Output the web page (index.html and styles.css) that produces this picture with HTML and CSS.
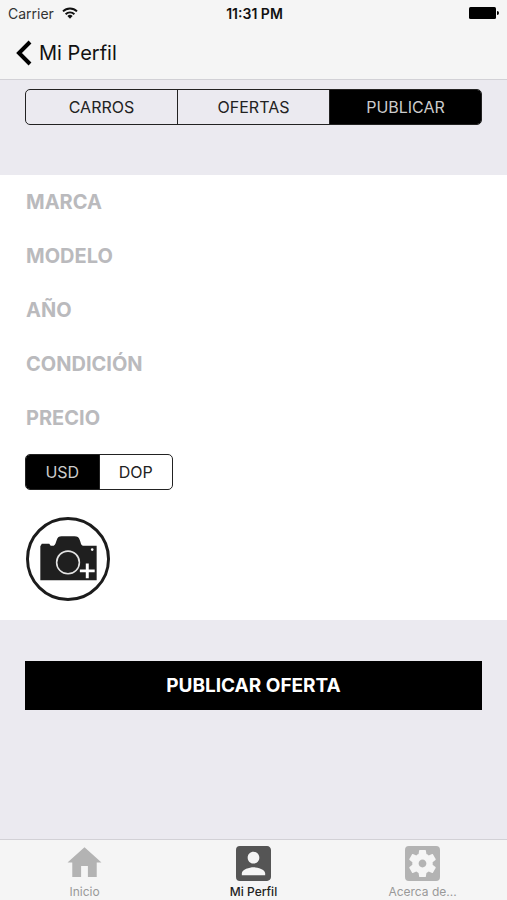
FILE: index.html
```html
<!DOCTYPE html>
<html lang="es">
<head>
<meta charset="utf-8">
<meta name="viewport" content="width=device-width, initial-scale=1">
<title>Mi Perfil</title>
<link rel="stylesheet" href="styles.css">
</head>
<body>
<div class="app">
  <header class="top">
    <div class="status">
      <div class="carrier">
        <span>Carrier</span>
        <svg class="wifi" viewBox="0 0 16 12" aria-hidden="true">
          <path d="M1 4.400a10 10 0 0 1 14 0M3.600 7.200a6.300 6.300 0 0 1 8.800 0" fill="none" stroke="currentColor" stroke-width="1.900"/>
          <path d="M8 11.700 5.400 9.100a3.700 3.700 0 0 1 5.200 0z" fill="currentColor"/>
        </svg>
      </div>
      <time class="clock">11:31 PM</time>
      <svg class="battery" viewBox="0 0 30 12" aria-hidden="true">
        <rect width="27" height="12" rx="1.500"/>
        <path d="M28 4a2 2 0 0 1 0 4z"/>
      </svg>
    </div>
    <nav class="nav">
      <a class="back" href="#perfil">
        <svg class="chevron" viewBox="0 0 16 26" aria-hidden="true">
          <path d="M14 2 3 13l11 11" fill="none" stroke="currentColor" stroke-width="4"/>
        </svg>
        <span>Mi Perfil</span>
      </a>
    </nav>
  </header>

  <main class="content">
    <div class="sections">
      <div class="segmented">
        <button class="segment" type="button">CARROS</button>
        <button class="segment" type="button">OFERTAS</button>
        <button class="segment selected" type="button">PUBLICAR</button>
      </div>
    </div>

    <form class="form">
      <div class="fields">
        <input class="field" type="text" placeholder="MARCA" aria-label="Marca">
        <input class="field" type="text" placeholder="MODELO" aria-label="Modelo">
        <input class="field" type="text" placeholder="AÑO" aria-label="Año">
        <input class="field" type="text" placeholder="CONDICIÓN" aria-label="Condición">
        <input class="field" type="text" placeholder="PRECIO" aria-label="Precio">
        <div class="segmented currency">
          <button class="segment selected" type="button">USD</button>
          <button class="segment" type="button">DOP</button>
        </div>
        <button class="photo" type="button" aria-label="Agregar foto">
          <svg viewBox="0 0 85 85" aria-hidden="true">
            <circle cx="42.500" cy="42.500" r="41" fill="#fff" stroke="#1c1c1c" stroke-width="3"/>
            <path d="M14.500 64V29.500l1.500-2.500h7.500l1.500 2H28c2-1 2-3 3-5.500 1-3 2.500-4 5-4h13c3 0 4.500 1 5.500 4 1 2.500 1 5 3 5.500H71.500V64z" fill="#1f1f1f"/>
            <circle cx="42.500" cy="46" r="11.500" fill="none" stroke="#e4e4e4" stroke-width="1.600"/>
            <circle cx="67" cy="33" r="1.300" fill="#fff"/>
            <path d="M62 47v15M54.500 54.500h15" fill="none" stroke="#fff" stroke-width="3"/>
          </svg>
        </button>
      </div>
      <div class="actions">
        <button class="submit" type="button">PUBLICAR OFERTA</button>
      </div>
    </form>
  </main>

  <nav class="tabs">
    <a class="tab" href="#inicio">
      <svg class="tab-icon" viewBox="1.700 2.300 20.600 20.600" aria-hidden="true"><path d="M10 20.500v-6.500h4v6.500h5.200v-8.500H22L12 3 2 12h2.800v8.500z"/></svg>
      <span>Inicio</span>
    </a>
    <a class="tab current" href="#perfil">
      <svg class="tab-icon" viewBox="3 3 18 18" aria-hidden="true"><path d="M3 5v14a2 2 0 0 0 2 2h14c1.100 0 2-.9 2-2V5c0-1.100-.9-2-2-2H5a2 2 0 0 0-2 2zm12 4c0 1.660-1.340 3-3 3s-3-1.340-3-3 1.340-3 3-3 3 1.340 3 3zm-9 8c0-2 4-3.100 6-3.100s6 1.100 6 3.100v1H6v-1z"/></svg>
      <span>Mi Perfil</span>
    </a>
    <a class="tab" href="#acerca">
      <svg class="tab-icon" viewBox="3 3 18 18" aria-hidden="true"><path d="M12 10c-1.100 0-2 .9-2 2s.9 2 2 2 2-.9 2-2-.9-2-2-2zm7-7H5a2 2 0 0 0-2 2v14a2 2 0 0 0 2 2h14a2 2 0 0 0 2-2V5a2 2 0 0 0-2-2zm-1.750 9c0 .23-.02.46-.05.68l1.480 1.160c.13.110.17.3.080.45l-1.400 2.420c-.09.150-.27.210-.43.150l-1.740-.7c-.36.280-.76.510-1.180.69l-.26 1.850c-.03.170-.18.3-.35.3h-2.800c-.17 0-.32-.13-.35-.29l-.26-1.850c-.43-.18-.82-.41-1.180-.69l-1.740.7c-.16.060-.34 0-.43-.15l-1.400-2.420c-.09-.15-.05-.34.080-.45l1.480-1.160c-.03-.23-.05-.46-.05-.69s.02-.46.050-.68l-1.480-1.160c-.13-.11-.17-.3-.08-.45l1.400-2.420c.09-.15.27-.21.43-.15l1.740.7c.36-.28.76-.51 1.180-.69l.26-1.850c.03-.17.18-.3.350-.3h2.800c.17 0 .32.130.35.290l.26 1.850c.43.180.82.410 1.180.69l1.740-.7c.16-.06.340 0 .43.150l1.400 2.420c.09.150.05.340-.08.450l-1.480 1.160c.03.230.05.460.05.690z"/></svg>
      <span>Acerca de...</span>
    </a>
  </nav>
</div>
</body>
</html>
```
FILE: styles.css
```css
* {
  box-sizing: border-box;
}

body {
  margin: 0;
  background: #ebeaf0;
  color: #111;
  font-family: Inter, "Liberation Sans", sans-serif;
}

button,
input {
  font: inherit;
}

a {
  color: inherit;
  text-decoration: none;
}

.app {
  display: flex;
  flex-direction: column;
  min-height: 100vh;
}

.top {
  background: #f5f5f5;
  border-bottom: 1px solid #d2d1d6;
}

.status {
  display: grid;
  grid-template-columns: 1fr auto 1fr;
  align-items: center;
  height: 26px;
  padding: 0 8px;
  font-size: 14px;
}

.carrier {
  display: flex;
  align-items: center;
  gap: 8px;
  color: #333;
}

.wifi {
  width: 16px;
  height: 12px;
  color: #111;
}

.clock {
  padding-left: 2px;
  font-weight: 600;
}

.battery {
  justify-self: end;
  width: 30px;
  height: 12px;
}

.nav {
  display: flex;
  align-items: center;
  height: 53px;
  padding: 0 16px;
}

.back {
  display: flex;
  align-items: center;
  gap: 7px;
  font-size: 20px;
}

.chevron {
  width: 16px;
  height: 26px;
  color: #000;
}

.content {
  flex: 1;
}

.sections {
  padding: 9px 25px 50px;
}

.segmented {
  display: flex;
  height: 36px;
  overflow: hidden;
  border: 1px solid #222;
  border-radius: 5px;
}

.segment {
  flex: 1;
  padding: 0;
  border: 0;
  background: none;
  color: #222;
  font-size: 16px;
}

.segment + .segment {
  border-left: 1px solid #222;
}

.segment.selected {
  background: #000;
  color: #ccc;
}

.fields {
  display: flex;
  flex-direction: column;
  padding: 0 25px 19px;
  background: #fff;
}

.field {
  width: 100%;
  height: 54px;
  padding: 0 1px;
  border: 0;
  outline: 0;
  background: none;
  color: #222;
  font-size: 20px;
  font-weight: 700;
}

.field::placeholder {
  color: #bababd;
  opacity: 1;
}

.currency {
  width: 148px;
  margin-top: 9px;
}

.photo {
  width: 84px;
  height: 84px;
  margin: 27px 1px 0;
  padding: 0;
  border: 0;
  border-radius: 50%;
  background: none;
}

.photo svg {
  display: block;
}

.actions {
  padding: 41px 25px;
}

.submit {
  width: 100%;
  height: 49px;
  border: 0;
  background: #000;
  color: #fff;
  font-size: 19px;
  font-weight: 700;
}

.tabs {
  display: grid;
  grid-template-columns: repeat(3, 1fr);
  height: 61px;
  padding-top: 6px;
  border-top: 1px solid #d2d1d6;
  background: #f5f5f5;
}

.tab {
  display: flex;
  flex-direction: column;
  align-items: center;
  gap: 3px;
  color: #999;
  font-size: 12px;
  line-height: 15px;
}

.tab-icon {
  width: 35px;
  height: 35px;
  fill: #b3b3b3;
}

.tab.current {
  color: #222;
  font-weight: 500;
}

.tab.current .tab-icon {
  fill: #555;
}
```
